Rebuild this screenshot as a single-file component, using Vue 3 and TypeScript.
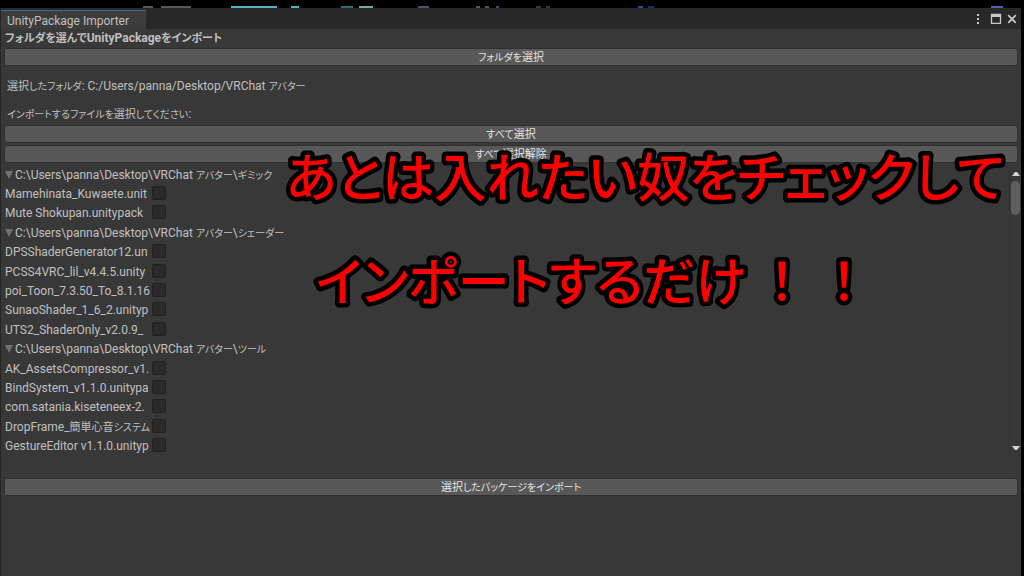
<script setup lang="ts">
import { h, reactive } from 'vue'

interface PackageFile {
  name: string
  checked: boolean
}
interface Folder {
  path: string
  files: PackageFile[]
}

const root = 'C:\\Users\\panna\\Desktop\\VRChat アバター\\'
const make = (folder: string, names: string[]): Folder => ({
  path: root + folder,
  files: names.map((name) => ({ name, checked: false })),
})

const folders = reactive<Folder[]>([
  make('ギミック', ['Mamehinata_Kuwaete.unit', 'Mute Shokupan.unitypack']),
  make('シェーダー', [
    'DPSShaderGenerator12.un',
    'PCSS4VRC_lil_v4.4.5.unity',
    'poi_Toon_7.3.50_To_8.1.16',
    'SunaoShader_1_6_2.unityp',
    'UTS2_ShaderOnly_v2.0.9_',
  ]),
  make('ツール', [
    'AK_AssetsCompressor_v1.6',
    'BindSystem_v1.1.0.unitypa',
    'com.satania.kiseteneex-2.',
    'DropFrame_簡単心音システム',
    'GestureEditor v1.1.0.unityp',
  ]),
])

const setAll = (value: boolean) => {
  for (const folder of folders) for (const file of folder.files) file.checked = value
}

// Sets kana and kanji slightly smaller than the Latin text beside them.
const Mixed = ({ text }: { text: string }) =>
  h(
    'span',
    text
      .split(/([\u3040-\u30ff]+|[\u4e00-\u9fff]+)/)
      .filter(Boolean)
      .map((run) => {
        if (/^[\u3040-\u30ff]/.test(run)) return h('span', { class: 'kana' }, run)
        if (/^[\u4e00-\u9fff]/.test(run)) return h('span', { class: 'kanji' }, run)
        return run
      }),
  )
Mixed.props = ['text']
</script>

<template>
  <div class="screen">
    <svg class="backdrop" height="9" width="1024" aria-hidden="true">
      <g fill="#55585a">
        <rect x="143" y="6" width="10" height="2" />
        <rect x="161" y="6" width="30" height="2" />
        <rect x="418" y="6" width="11" height="2" fill="#514f70" />
        <rect x="476" y="6" width="4" height="2" />
        <rect x="485" y="6" width="4" height="2" />
        <rect x="496" y="6" width="3" height="2" fill="#444a78" />
        <rect x="536" y="6" width="5" height="2" fill="#353839" />
        <rect x="546" y="6" width="4" height="2" fill="#353839" />
      </g>
      <g fill="#4fb4c4">
        <rect x="231" y="6" width="46" height="2" />
        <rect x="291" y="6" width="8" height="2" />
        <rect x="341" y="6" width="12" height="2" fill="#2a6d6a" />
        <rect x="359" y="6" width="14" height="2" fill="#7aa89d" />
      </g>
      <rect x="638" y="6" width="5" height="2" fill="#304a9a" />
      <rect x="648" y="6" width="6" height="2" fill="#1c2c66" />
      <rect x="991" y="6" width="12" height="2" fill="#5060b0" />
    </svg>

    <main class="window">
      <header class="titlebar">
        <h1 class="tab">UnityPackage Importer</h1>
        <div class="controls">
          <button type="button" aria-label="メニュー">
            <svg width="4" height="12" viewBox="0 0 4 12" fill="#c8c8c8">
              <rect x="1" y="1" width="2" height="2" />
              <rect x="1" y="5" width="2" height="2" />
              <rect x="1" y="9" width="2" height="2" />
            </svg>
          </button>
          <button type="button" aria-label="最大化">
            <svg width="12" height="12" viewBox="0 0 12 12">
              <path d="M1.500 1.500h9v8.800h-9z" fill="none" stroke="#c8c8c8" stroke-width="1.300" />
              <path d="M1 1h10v3H1z" fill="#c8c8c8" />
            </svg>
          </button>
          <button type="button" aria-label="閉じる">
            <svg width="12" height="12" viewBox="0 0 12 12">
              <path d="M2.200 2.200l7.600 7.600M9.800 2.200l-7.600 7.600" stroke="#c8c8c8" stroke-width="1.800" />
            </svg>
          </button>
        </div>
      </header>

      <section class="body">
        <h2 class="heading"><Mixed text="フォルダを選んでUnityPackageをインポート" /></h2>
        <button type="button" class="bar"><Mixed text="フォルダを選択" /></button>
        <p class="note"><Mixed text="選択したフォルダ: C:/Users/panna/Desktop/VRChat アバター" /></p>
        <p class="note prompt"><Mixed text="インポートするファイルを選択してください:" /></p>
        <div class="pair">
          <button type="button" class="bar" @click="setAll(true)"><Mixed text="すべて選択" /></button>
          <button type="button" class="bar" @click="setAll(false)"><Mixed text="すべて選択解除" /></button>
        </div>

        <div class="scroll">
          <div class="list">
            <template v-for="folder in folders" :key="folder.path">
              <button type="button" class="folder" aria-expanded="true">
                <svg width="8" height="8" viewBox="0 0 8 8"><path d="M0 0h8L4 8z" fill="#727272" /></svg>
                <Mixed :text="folder.path" />
              </button>
              <label v-for="file in folder.files" :key="file.name" class="file">
                <span class="name"><Mixed :text="file.name" /></span>
                <input v-model="file.checked" type="checkbox" />
              </label>
            </template>
          </div>
          <div class="scrollbar" aria-hidden="true">
            <svg width="8" height="5" viewBox="0 0 8 5"><path d="M0 5l3-4h2l3 4z" fill="#d2d2d2" /></svg>
            <div class="track"><div class="thumb"></div></div>
            <svg width="8" height="5" viewBox="0 0 8 5"><path d="M0 0l3 4h2l3-4z" fill="#d2d2d2" /></svg>
          </div>
        </div>

        <button type="button" class="bar"><Mixed text="選択したパッケージをインポート" /></button>
      </section>
    </main>

    <svg class="caption" width="730" height="200">
      <text x="0" y="65">あとは入れたい奴をチェックして</text>
      <text x="30" y="169">インポートするだけ</text>
      <text x="496" y="169" text-anchor="middle">！</text>
      <text x="558" y="169" text-anchor="middle">！</text>
    </svg>
  </div>
</template>

<style>
body {
  margin: 0;
  background: #000;
}
</style>

<style scoped>
.screen {
  position: relative;
  display: flex;
  flex-direction: column;
  min-height: 100vh;
  overflow: hidden;
  background: #000;
  color: #c0c0c0;
  font-family: Roboto, "Noto Sans CJK JP", sans-serif;
  font-size: 12px;
  line-height: 16px;
  font-feature-settings: "palt";
}
.screen :deep(.kana) {
  font-size: 10px;
  line-height: 0;
}
.screen :deep(.kanji) {
  font-size: 11px;
  line-height: 0;
}
.backdrop {
  display: block;
  height: 8px;
}
.window {
  flex: 1;
  display: flex;
  flex-direction: column;
  margin-right: 3px;
  border-left: 1px solid #252525;
  background: #383838;
}
h1,
h2,
p {
  margin: 0;
}
button {
  margin: 0;
  padding: 0;
  border: 0;
  background: none;
  color: inherit;
  font: inherit;
  font-feature-settings: inherit;
}
.titlebar {
  display: flex;
  justify-content: space-between;
  align-items: flex-end;
  height: 21px;
  background: #282828;
}
.tab {
  box-sizing: border-box;
  height: 19px;
  min-width: 145px;
  padding: 1px 12px 0 6px;
  border-top: 1px solid #3a6d96;
  background: #3c3c3c;
  font-size: 12px;
  font-weight: 400;
  line-height: 18px;
}
.controls {
  display: flex;
  align-items: center;
  gap: 4px;
  height: 20px;
  padding-right: 3px;
}
.controls button {
  display: flex;
}
.controls button:first-child {
  margin-right: 6px;
}
.body {
  display: flex;
  flex-direction: column;
  padding: 1px 3px 0 3px;
}
.heading {
  padding-left: 1px;
  font-size: 12px;
  font-weight: 700;
  line-height: 16px;
  margin-bottom: 2px;
}
.heading :deep(.kana) {
  font-size: 11px;
}
.bar {
  box-sizing: border-box;
  width: 100%;
  height: 18px;
  border: 1px solid #303030;
  border-radius: 3px;
  background: #585858;
  color: #e4e4e4;
  line-height: 16px;
}
.note {
  margin-top: 12px;
  padding-left: 3px;
}
.prompt {
  margin-bottom: 3px;
}
.pair {
  display: grid;
  gap: 2px;
}
.scroll {
  display: flex;
  justify-content: space-between;
  height: 291px;
  margin: 2px -3px 22px 0;
}
.list {
  flex: 1;
  display: grid;
  grid-auto-rows: 1fr;
  padding-left: 1px;
}
.folder {
  display: flex;
  align-items: center;
  gap: 2px;
  text-align: left;
}
.file {
  display: flex;
  align-items: center;
  gap: 2px;
}
.name {
  width: 145px;
  overflow: hidden;
  white-space: nowrap;
}
.file input {
  appearance: none;
  box-sizing: border-box;
  width: 14px;
  height: 14px;
  margin: 0 0 2px;
  border: 1px solid #212121;
  border-radius: 2px;
  background: #2a2a2a;
}
.file input:checked {
  background: #c4c4c4;
}
.scrollbar {
  display: flex;
  flex-direction: column;
  align-items: center;
  gap: 5px;
  width: 11px;
  padding: 6px 0 5px;
  border-left: 1px solid #323232;
}
.track {
  flex: 1;
}
.thumb {
  width: 9px;
  height: 34px;
  border-radius: 5px;
  background: #5f5f5f;
}
.caption {
  position: absolute;
  top: 132px;
  left: 286px;
  overflow: visible;
  fill: #f00;
  stroke: #000;
  stroke-width: 9px;
  stroke-linejoin: round;
  paint-order: stroke fill;
  font-family: "Noto Sans CJK JP", sans-serif;
  font-size: 52px;
  font-weight: 500;
  pointer-events: none;
}
</style>
